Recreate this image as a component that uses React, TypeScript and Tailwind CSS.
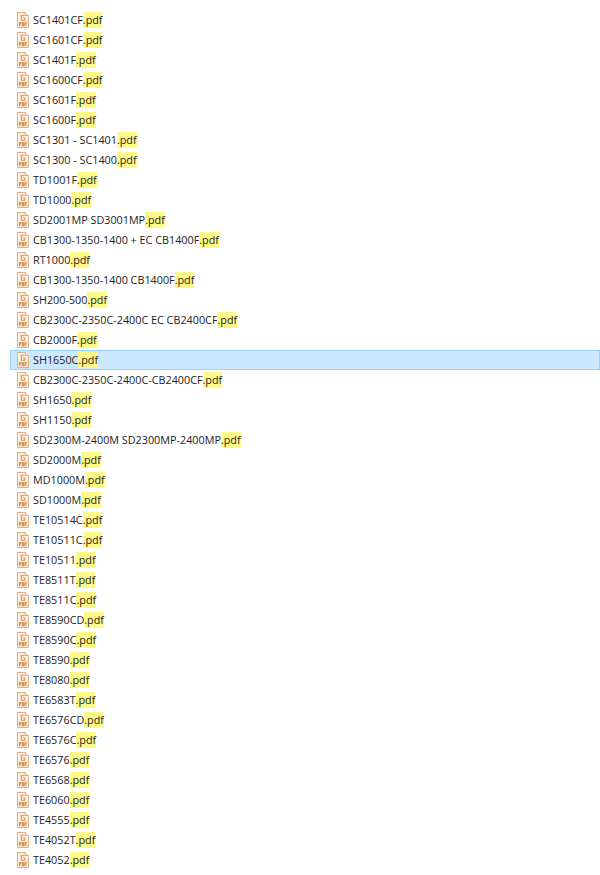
const files = [
  'SC1401CF', 'SC1601CF', 'SC1401F', 'SC1600CF', 'SC1601F', 'SC1600F',
  'SC1301 - SC1401', 'SC1300 - SC1400', 'TD1001F', 'TD1000', 'SD2001MP SD3001MP',
  'CB1300-1350-1400 + EC CB1400F', 'RT1000', 'CB1300-1350-1400 CB1400F', 'SH200-500',
  'CB2300C-2350C-2400C EC CB2400CF', 'CB2000F', 'SH1650C', 'CB2300C-2350C-2400C-CB2400CF',
  'SH1650', 'SH1150', 'SD2300M-2400M SD2300MP-2400MP', 'SD2000M', 'MD1000M', 'SD1000M',
  'TE10514C', 'TE10511C', 'TE10511', 'TE8511T', 'TE8511C', 'TE8590CD', 'TE8590C', 'TE8590',
  'TE8080', 'TE6583T', 'TE6576CD', 'TE6576C', 'TE6576', 'TE6568', 'TE6060', 'TE4555',
  'TE4052T', 'TE4052',
];

function FileIcon() {
  return (
    <svg width="14" height="16" viewBox="0 0 14 16" className="shrink-0">
      <path d="M1.5 .5H9.5L12.5 3.5V15.5H1.5Z" fill="#fdf3e6" stroke="#e0b080" />
      <path d="M9.5 .5V3.5H12.5" fill="#fff" stroke="#e0b080" />
      <path d="M8.8 3.2H5.3V8.2H8.8V6H7" fill="none" stroke="#d9924f" strokeWidth="1.1" />
      <rect x="2.5" y="9.5" width="9" height="5" fill="#f6d8b4" />
      <path d="M3.5 14V10.5H5V12H3.5M6.5 10.5V14H7.6V10.5ZM9 14V10.5H10.6M9 12H10.4" fill="none" stroke="#b87a3e" strokeWidth=".7" />
    </svg>
  );
}

export default function App() {
  return (
    <div className="w-[600px] h-[875px] overflow-hidden bg-white pt-[10px] pl-[10px] font-['Open_Sans','Noto_Sans',sans-serif] text-[10.8px] text-[#222]">
      {files.map((name) => (
        <div
          key={name}
          className={
            name === 'SH1650C'
              ? 'flex h-5 items-center gap-[3px] border border-[#99d1ff] bg-[#cce8ff] pl-[5px]'
              : 'flex h-5 items-center gap-[3px] pl-[6px]'
          }
        >
          <FileIcon />
          <span className="whitespace-nowrap leading-[16px]">
            {name}
            <span className="inline-block bg-[#fff98a]">.pdf</span>
          </span>
        </div>
      ))}
    </div>
  );
}
